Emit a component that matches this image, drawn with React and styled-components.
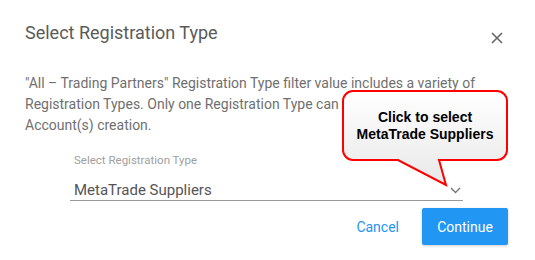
import React from 'react';

// Styled Component
import styled, { createGlobalStyle } from 'styled-components';

const GlobalStyle = createGlobalStyle`
  html, body {
    margin: 0;
    padding: 0;
    background: #fff;
    font-family: Roboto, "Open Sans", Arial, sans-serif;
  }
`;

function CloseIcon() {
  return (
    <svg width='12' height='12' viewBox='0 0 12 12'>
      <path d='M1 1 L11 11 M11 1 L1 11' stroke='#666' strokeWidth='1.6' fill='none' />
    </svg>
  );
}

function Chevron() {
  return (
    <svg width='11' height='7' viewBox='0 0 11 7'>
      <path d='M1 1 L5.5 5.5 L10 1' stroke='#777' strokeWidth='1.4' fill='none' />
    </svg>
  );
}

function Callout() {
  return (
    <CalloutWrapper>
      <svg width='170' height='100' viewBox='0 0 170 100'>
        <defs>
          <linearGradient id='calloutFill' x1='0' y1='0' x2='0' y2='1'>
            <stop offset='0' stopColor='#ffffff' />
            <stop offset='1' stopColor='#e8e8e8' />
          </linearGradient>
        </defs>
        <path
          d='M12 2 H156 A10 10 0 0 1 166 12 V61 A10 10 0 0 1 156 71 H98 L105 96 L57 71 H12 A10 10 0 0 1 2 61 V12 A10 10 0 0 1 12 2 Z'
          fill='url(#calloutFill)'
          stroke='#f00'
          strokeWidth='2'
          strokeLinejoin='miter'
        />
      </svg>
      <CalloutText>
        Click to select
        <br />
        MetaTrade Suppliers
      </CalloutText>
    </CalloutWrapper>
  );
}

function App() {
  return (
    <>
      <GlobalStyle />
      <Dialog>
        <Header>
          <Title>Select Registration Type</Title>
          <CloseButton aria-label='Close'>
            <CloseIcon />
          </CloseButton>
        </Header>
        <Description>
          "All – Trading Partners" Registration Type filter value includes a variety of
          Registration Types. Only one Registration Type can be selected for the
          Account(s) creation.
        </Description>
        <Field>
          <FieldLabel>Select Registration Type</FieldLabel>
          <SelectRow>
            <SelectValue>MetaTrade Suppliers</SelectValue>
            <Chevron />
          </SelectRow>
        </Field>
        <Actions>
          <TextButton>Cancel</TextButton>
          <PrimaryButton>Continue</PrimaryButton>
        </Actions>
        <Callout />
      </Dialog>
    </>
  );
}

const Dialog = styled.div`
  position: relative;
  width: 535px;
  height: 260px;
  box-sizing: border-box;
  padding: 21px 27px 0 25px;
  background: #fff;
`;

const Header = styled.div`
  display: flex;
  justify-content: space-between;
  align-items: flex-start;
`;

const Title = styled.h2`
  margin: 0;
  font-size: 18px;
  line-height: 24px;
  font-weight: 400;
  color: #5a5a5a;
`;

const CloseButton = styled.button`
  margin: 11px 5px 0 0;
  padding: 0;
  border: none;
  background: transparent;
  display: flex;
  cursor: pointer;
`;

const Description = styled.p`
  margin: 28px 0 0;
  width: 470px;
  font-size: 14px;
  line-height: 21px;
  color: #707070;
`;

const Field = styled.div`
  margin: 16px 0 0 45px;
  width: 393px;
`;

const FieldLabel = styled.div`
  padding-left: 4px;
  font-size: 11.5px;
  line-height: 16px;
  color: #a0a0a0;
`;

const SelectRow = styled.div`
  margin-top: 12px;
  height: 20px;
  display: flex;
  justify-content: space-between;
  align-items: center;
  border-bottom: 1px solid #999;
  padding: 0 2px 0 4px;
`;

const SelectValue = styled.span`
  font-size: 15px;
  color: #555;
  line-height: 20px;
`;

const Actions = styled.div`
  margin-top: 7px;
  display: flex;
  justify-content: flex-end;
  align-items: center;
  gap: 15px;
`;

const TextButton = styled.button`
  border: none;
  background: transparent;
  padding: 0 8px 0 12px;
  height: 37px;
  font-family: inherit;
  font-size: 14px;
  color: #2196f3;
  cursor: pointer;
`;

const PrimaryButton = styled.button`
  width: 86px;
  height: 37px;
  border: none;
  border-radius: 2px;
  background: #2196f3;
  color: #fff;
  font-family: inherit;
  font-size: 14px;
  font-weight: 400;
  box-shadow: 0 1px 3px rgba(0, 0, 0, 0.2);
  cursor: pointer;
`;

const CalloutWrapper = styled.div`
  position: absolute;
  left: 341px;
  top: 89px;
  width: 170px;
  height: 100px;

  svg {
    display: block;
  }
`;

const CalloutText = styled.div`
  position: absolute;
  left: 2px;
  top: 20px;
  width: 164px;
  text-align: center;
  font-family: "Liberation Sans", Arial, sans-serif;
  font-weight: 700;
  font-size: 14px;
  line-height: 17px;
  color: #000;
`;

export default App;
